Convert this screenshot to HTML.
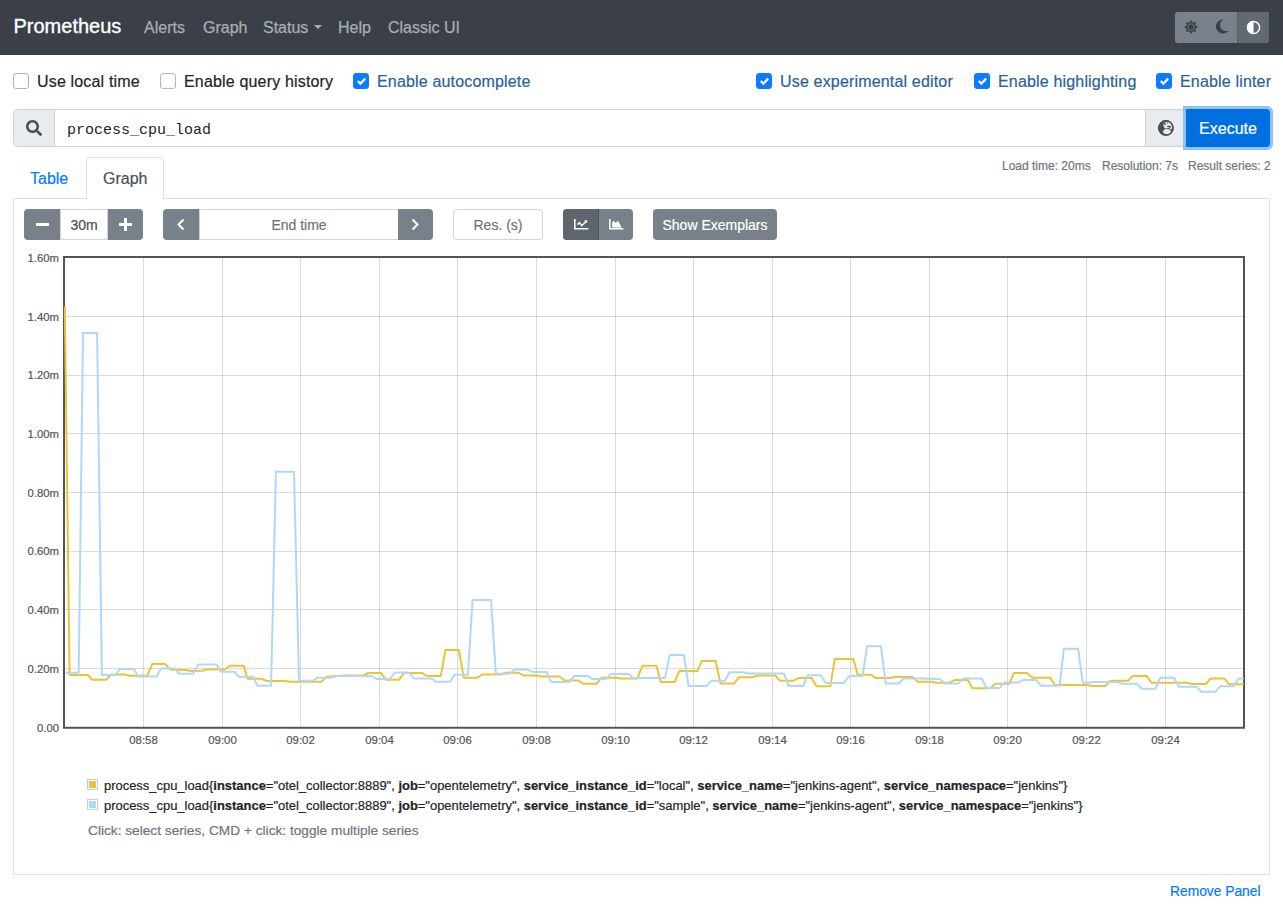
<!DOCTYPE html>
<html><head><meta charset="utf-8">
<style>
*{box-sizing:border-box}
html,body{margin:0;padding:0;width:1283px;height:906px;overflow:hidden;background:#fff;font-family:"Liberation Sans",sans-serif;color:#212529}
body{-webkit-text-stroke-width:0.2px}
.a{position:absolute;white-space:nowrap}
#nav{position:absolute;left:0;top:0;width:1283px;height:55px;background:#3b4048}
.brand{font-size:20px;color:#fff;left:13.5px;top:13.5px;line-height:24px;-webkit-text-stroke:0.35px #fff}
.nl{font-size:16px;color:#a9adb1;top:18px;line-height:20px;-webkit-text-stroke:0.25px #a9adb1}
.caret{position:absolute;left:313.5px;top:24.5px;width:0;height:0;border-left:4px solid transparent;border-right:4px solid transparent;border-top:4.5px solid #a9adb1}
.theme{position:absolute;left:1175px;top:12px;width:94px;height:31px;border-radius:3px;overflow:hidden;background:#7a818a}
.theme .act{position:absolute;left:62px;top:0;width:32px;height:31px;background:#636970;border-left:1px dotted #555}
.cb{position:absolute;width:16px;height:16px;border:1px solid #adb5bd;border-radius:3px;background:#fff;top:73px}
.cb.on{background:#0b7bff;border-color:#0b7bff}
.cb.on svg{position:absolute;left:3px;top:3px}
.lbl{font-size:16px;letter-spacing:0.17px;top:73px;line-height:18px;color:#212529}
.lbl.on{color:#2b6299}
.ig{position:absolute;left:13px;top:109px;width:1172px;height:38px;border:1px solid #ced4da;border-radius:4px 0 0 4px;background:#fff}
.ig .pre{position:absolute;left:0;top:0;width:41px;height:36px;background:#e9ecef;border-right:1px solid #ced4da}
.ig .post{position:absolute;right:0;top:0;width:39px;height:36px;background:#e9ecef;border-left:1px solid #ced4da}
.q{-webkit-text-stroke-width:0;font-family:"Liberation Mono",monospace;font-size:15px;left:67px;top:122px;line-height:18px;color:#212529}
.exe{position:absolute;left:1183px;top:106px;width:90px;height:44px;border-radius:0 6px 6px 0;background:#8fc2fb}
.exe div{position:absolute;left:3px;top:3px;width:84px;height:38px;border-radius:0 4px 4px 0;background:#0070e0;color:#fff;font-size:16px;line-height:40px;text-align:center}
.stats{font-size:12px;color:#6c757d;top:159px;line-height:14px}
.tabline{position:absolute;left:13px;top:198px;width:1257px;height:1px;background:#dee2e6}
.tab{position:absolute;left:86px;top:157px;width:78px;height:42px;border:1px solid #dee2e6;border-bottom:0;border-radius:4px 4px 0 0;background:#fff}
.panel{position:absolute;left:13px;top:198px;width:1257px;height:677px;border:1px solid #dee2e6;border-top:0}
.t16{font-size:16px;line-height:20px;top:169px}
.btn{position:absolute;background:#78808a;color:#fff;top:209px;height:31px}
.inp{position:absolute;top:209px;height:31px;border:1px solid #ced4da;background:#fff;color:#6c757d;font-size:14px;line-height:31px;text-align:center}
.xl{font-size:11.4px;color:#545454;width:60px;text-align:center;top:733px;line-height:14px}
.yl{font-size:11.3px;color:#545454;width:50px;text-align:right;left:9px;line-height:14px}
.leg{font-size:12.95px;left:104px;line-height:16px;color:#212529}
.leg b{font-weight:bold}
.sw{position:absolute;left:87px;width:11px;height:11px;border:1px solid #ccc;padding:1px;background:#fff}
.sw div{width:7px;height:7px}
</style></head><body>
<div id="nav">
  <div class="a brand">Prometheus</div>
  <div class="a nl" style="left:144px">Alerts</div>
  <div class="a nl" style="left:203px">Graph</div>
  <div class="a nl" style="left:263px">Status</div>
  <div class="caret"></div>
  <div class="a nl" style="left:338px">Help</div>
  <div class="a nl" style="left:388px">Classic UI</div>
  <div class="theme">
    <svg style="position:absolute;left:8px;top:7px" width="16" height="16" viewBox="0 0 16 16"><path fill="#3b4048" d="M15.00 8.00L12.20 6.12L12.20 9.88zM12.95 12.95L12.30 9.64L9.64 12.30zM8.00 15.00L9.88 12.20L6.12 12.20zM3.05 12.95L6.36 12.30L3.70 9.64zM1.00 8.00L3.80 9.88L3.80 6.12zM3.05 3.05L3.70 6.36L6.36 3.70zM8.00 1.00L6.12 3.80L9.88 3.80zM12.95 3.05L9.64 3.70L12.30 6.36z"/><circle cx="8" cy="8" r="4.6" fill="#3b4048"/><circle cx="8" cy="8" r="3.2" fill="none" stroke="#8a9098" stroke-width="0.6"/><rect x="6.2" y="6.2" width="3.6" height="3.6" fill="#3b4048"/></svg>
    <svg style="position:absolute;left:39px;top:7px" width="15" height="15" viewBox="0 0 16 16"><path fill="#3b4048" d="M10.5 0.5A7.5 7.5 0 1 0 15.5 12.5 6 6 0 0 1 10.5 0.5z"/></svg>
    <div class="act"></div>
    <svg style="position:absolute;left:70.5px;top:7.5px" width="15" height="15" viewBox="0 0 16 16"><circle cx="8" cy="8" r="6.5" fill="#636970" stroke="#fff" stroke-width="1.6"/><path d="M8 1.5A6.5 6.5 0 0 0 8 14.5z" fill="#fff"/></svg>
  </div>
</div>

<div class="cb" style="left:13px"></div><div class="a lbl" style="left:37px">Use local time</div>
<div class="cb" style="left:160px"></div><div class="a lbl" style="left:184px">Enable query history</div>
<div class="cb on" style="left:353px"><svg width="9" height="9" viewBox="0 0 8 8"><path fill="#fff" d="M6.564.75l-3.59 3.612-1.538-1.55L0 4.26l2.974 2.99L8 2.193z"/></svg></div><div class="a lbl on" style="left:377px">Enable autocomplete</div>
<div class="cb on" style="left:756px"><svg width="9" height="9" viewBox="0 0 8 8"><path fill="#fff" d="M6.564.75l-3.59 3.612-1.538-1.55L0 4.26l2.974 2.99L8 2.193z"/></svg></div><div class="a lbl on" style="left:780px">Use experimental editor</div>
<div class="cb on" style="left:974px"><svg width="9" height="9" viewBox="0 0 8 8"><path fill="#fff" d="M6.564.75l-3.59 3.612-1.538-1.55L0 4.26l2.974 2.99L8 2.193z"/></svg></div><div class="a lbl on" style="left:998px">Enable highlighting</div>
<div class="cb on" style="left:1156px"><svg width="9" height="9" viewBox="0 0 8 8"><path fill="#fff" d="M6.564.75l-3.59 3.612-1.538-1.55L0 4.26l2.974 2.99L8 2.193z"/></svg></div><div class="a lbl on" style="left:1180px">Enable linter</div>

<div class="ig">
  <div class="pre"><svg style="position:absolute;left:12px;top:10px" width="16" height="16" viewBox="0 0 512 512"><path fill="#495057" d="M505 442.7L405.3 343c-4.500-4.500-10.600-7-17-7H372c27.600-35.300 44-79.700 44-128C416 93.100 322.900 0 208 0S0 93.100 0 208s93.100 208 208 208c48.300 0 92.700-16.400 128-44v16.300c0 6.400 2.500 12.500 7 17l99.700 99.700c9.400 9.400 24.600 9.400 33.900 0l28.300-28.300c9.400-9.400 9.400-24.600.1-34zM208 336c-70.700 0-128-57.200-128-128 0-70.700 57.200-128 128-128 70.700 0 128 57.200 128 128 0 70.700-57.200 128-128 128z"/></svg></div>
  <div class="post"><svg style="position:absolute;left:12px;top:10px" width="16" height="16" viewBox="0 0 16 16"><circle cx="7.9" cy="7.9" r="7.8" fill="#495057"/><path fill="#e9ecef" d="M5.2 4.6L6.6 2.6 9 1.9 11.8 2.6 13.6 5 14.1 7.8 13.6 9.6 12.1 8.7 10.6 7.9 9 8.2 7.3 8.4 6.1 7.6 5.6 6z"/><ellipse cx="9" cy="11.6" rx="3.9" ry="2.6" fill="#e9ecef"/><circle cx="7.9" cy="7.9" r="7.1" fill="none" stroke="#495057" stroke-width="1.3"/><circle cx="6.9" cy="3.9" r="1" fill="#495057"/><circle cx="9.4" cy="3.1" r="0.6" fill="#495057"/><path fill="#495057" d="M8.3 6.4L10.8 5.4 13 6.6 12.4 8.2 10.6 7.2z"/></svg></div>
</div>
<div class="a q">process_cpu_load</div>
<div class="exe"><div>Execute</div></div>

<div class="a stats" style="left:1002px">Load time: 20ms</div>
<div class="a stats" style="left:1102px">Resolution: 7s</div>
<div class="a stats" style="left:1188px">Result series: 2</div>

<div class="panel"></div>
<div class="tabline"></div>
<div class="tab"></div>
<div class="a t16" style="left:30px;color:#007bff">Table</div>
<div class="a t16" style="left:103px;color:#495057">Graph</div>

<!-- controls -->
<div class="btn" style="left:24px;width:36px;border-radius:4px 0 0 4px"><div style="position:absolute;left:11.5px;top:13.5px;width:13px;height:3px;background:#fff"></div></div>
<div class="inp" style="left:60px;width:48px;color:#495057">30m</div>
<div class="btn" style="left:108px;width:35px;border-radius:0 4px 4px 0"><div style="position:absolute;left:11px;top:13.5px;width:13px;height:3px;background:#fff"></div><div style="position:absolute;left:16px;top:8.5px;width:3px;height:13px;background:#fff"></div></div>

<div class="btn" style="left:163px;width:36px;border-radius:4px 0 0 4px"><svg style="position:absolute;left:13px;top:9px" width="10" height="13" viewBox="0 0 10 13"><path d="M7.5 1.5L2.5 6.5l5 5" fill="none" stroke="#fff" stroke-width="2"/></svg></div>
<div class="inp" style="left:199px;width:200px">End time</div>
<div class="btn" style="left:398px;width:35px;border-radius:0 4px 4px 0"><svg style="position:absolute;left:12px;top:9px" width="10" height="13" viewBox="0 0 10 13"><path d="M2.5 1.5l5 5-5 5" fill="none" stroke="#fff" stroke-width="2"/></svg></div>

<div class="inp" style="left:453px;width:90px;border-radius:4px">Res. (s)</div>

<div class="btn" style="left:563px;width:70px;border-radius:4px;overflow:hidden">
  <div style="position:absolute;left:0;top:0;width:36px;height:31px;background:#5f656d;border-right:1px dotted rgba(0,0,0,0.28)"></div>
  <svg style="position:absolute;left:10.7px;top:10.1px" width="15" height="11" viewBox="0 0 15 11"><path d="M0.8 0v9.8h13.5" fill="none" stroke="#fff" stroke-width="1.6"/><path d="M3.4 5.6l2.1-2 2.3 3.1 3.9-3.9" fill="none" stroke="#fff" stroke-width="1.5"/><path d="M10 1.2h3.1v3.1z" fill="#fff"/></svg>
  <svg style="position:absolute;left:45.6px;top:10.1px" width="15" height="11" viewBox="0 0 15 11"><path d="M0.8 0v9.8h13.5" fill="none" stroke="#fff" stroke-width="1.6"/><path d="M3.1 8.4V3.6l1.5-2 1.7 2.2 1.3-0.9 1.6-1.2 1.2 2.5 2.2 4.2z" fill="#fff"/></svg>
</div>

<div class="btn" style="left:653px;width:124px;border-radius:4px;font-size:14px;line-height:33px;text-align:center">Show Exemplars</div>

<!-- chart -->
<svg style="position:absolute;left:0;top:0" width="1283" height="906">
  <g stroke="rgba(0,0,0,0.14)" stroke-width="1"><line x1="143.5" y1="257" x2="143.5" y2="728" /><line x1="222.5" y1="257" x2="222.5" y2="728" /><line x1="300.5" y1="257" x2="300.5" y2="728" /><line x1="379.5" y1="257" x2="379.5" y2="728" /><line x1="457.5" y1="257" x2="457.5" y2="728" /><line x1="536.5" y1="257" x2="536.5" y2="728" /><line x1="615.5" y1="257" x2="615.5" y2="728" /><line x1="693.5" y1="257" x2="693.5" y2="728" /><line x1="772.5" y1="257" x2="772.5" y2="728" /><line x1="850.5" y1="257" x2="850.5" y2="728" /><line x1="929.5" y1="257" x2="929.5" y2="728" /><line x1="1007.5" y1="257" x2="1007.5" y2="728" /><line x1="1086.5" y1="257" x2="1086.5" y2="728" /><line x1="1165.5" y1="257" x2="1165.5" y2="728" /><line x1="64" y1="316.5" x2="1244" y2="316.5" /><line x1="64" y1="375.5" x2="1244" y2="375.5" /><line x1="64" y1="433.5" x2="1244" y2="433.5" /><line x1="64" y1="492.5" x2="1244" y2="492.5" /><line x1="64" y1="551.5" x2="1244" y2="551.5" /><line x1="64" y1="609.5" x2="1244" y2="609.5" /><line x1="64" y1="668.5" x2="1244" y2="668.5" /></g>
  <rect x="64" y="257" width="1180" height="470.75" fill="none" stroke="#545454" stroke-width="2"/>
  <polyline points="64.8,306.6 69.6,675.0 87.8,675.0 92.2,679.8 106.4,679.8 110.7,674.6 124.4,674.6 129.8,675.7 147.3,675.7 152.2,664.0 165.3,664.0 170.2,669.8 186.0,670.0 191.0,671.0 202.6,670.8 205.9,669.5 225.1,669.5 229.7,665.8 243.7,665.8 247.6,678.8 261.5,678.8 266.9,681.0 285.4,681.0 289.4,681.7 321.2,681.7 326.5,676.8 345.0,675.5 363.2,675.5 367.9,673.1 381.1,673.1 385.8,679.7 399.3,679.7 403.7,673.1 422.2,673.1 426.9,675.9 440.8,675.9 445.4,650.0 458.9,650.0 463.7,677.7 477.2,677.7 482.5,674.5 501.0,674.5 505.7,672.8 518.6,672.8 523.3,675.5 536.5,675.5 541.8,676.4 559.7,676.4 564.3,680.5 578.2,680.5 582.9,683.7 596.8,683.7 601.4,677.7 617.3,677.7 620.0,678.5 637.2,678.5 642.5,665.8 656.4,665.8 660.8,682.1 674.6,682.0 679.3,671.1 697.2,671.1 701.8,660.9 715.7,660.9 720.4,683.4 734.3,683.4 738.9,677.2 752.2,677.2 757.5,675.5 775.3,675.5 780.0,680.8 793.2,680.8 798.5,678.1 811.8,678.1 816.4,686.3 830.3,686.3 834.8,658.9 853.2,658.9 857.8,674.8 871.1,674.8 875.7,678.1 890.3,678.1 894.9,677.1 912.8,677.1 917.5,681.7 932.0,681.7 936.0,682.8 949.3,682.8 954.6,680.1 967.8,680.1 972.4,688.3 990.3,688.3 995.5,683.8 1009.2,683.8 1013.9,673.1 1027.1,673.1 1032.4,677.7 1050.3,677.7 1054.9,685.1 1087.4,685.1 1092.0,686.1 1105.3,686.1 1109.9,680.8 1128.0,680.8 1132.7,676.1 1147.0,676.1 1151.3,682.8 1187.4,682.8 1192.0,684.1 1205.9,684.1 1210.6,678.5 1224.5,678.5 1229.1,684.3 1243.7,684.3" fill="none" stroke="#eec235" stroke-width="2" stroke-linejoin="round"/>
  <polyline points="65.5,672.7 78.7,672.7 83.0,333.0 97.1,333.0 101.9,675.0 115.6,675.0 119.8,669.0 134.2,669.0 138.0,676.6 156.6,676.6 161.0,668.4 174.6,668.4 179.0,673.8 193.3,673.8 198.0,664.6 216.5,664.6 221.1,671.8 234.4,671.8 239.0,676.8 252.9,676.8 257.6,685.7 271.1,685.7 275.9,471.8 294.0,471.8 299.0,680.8 312.6,680.8 317.2,677.7 330.5,677.7 335.8,676.1 371.9,676.1 376.5,679.0 389.8,679.0 395.0,672.5 409.0,672.5 413.6,678.5 431.5,678.5 436.1,681.8 450.0,681.8 454.7,674.8 467.9,674.8 472.6,599.9 491.1,599.9 495.8,673.7 509.7,673.7 514.5,669.6 527.2,669.6 532.5,671.9 546.4,671.9 551.1,682.1 569.0,682.1 574.3,675.9 587.5,675.9 592.2,679.0 606.1,679.0 610.7,674.1 629.3,674.1 633.2,678.1 665.0,678.1 669.7,655.0 683.9,655.0 688.6,686.1 706.4,686.1 711.1,680.8 725.0,680.8 729.6,672.2 743.5,672.2 748.2,673.5 784.0,673.5 788.6,686.1 803.2,686.1 807.8,675.2 821.0,675.2 825.7,683.1 843.9,683.0 849.2,675.9 862.5,675.9 867.1,646.3 881.0,646.3 885.7,683.4 898.9,683.4 903.5,678.5 922.0,678.5 940.0,679.0 944.6,683.4 958.5,683.4 963.2,678.5 981.7,678.5 986.4,688.0 999.9,688.0 1003.9,682.5 1017.8,682.5 1023.1,680.1 1036.4,680.1 1041.0,685.8 1059.6,685.8 1063.9,648.7 1078.1,648.7 1082.8,682.8 1099.0,682.1 1117.8,682.1 1122.5,683.8 1137.0,683.8 1141.7,688.7 1155.6,688.7 1160.2,677.8 1174.1,677.8 1178.8,686.7 1196.7,686.7 1201.3,691.8 1215.2,691.8 1219.9,686.3 1233.8,686.3 1238.4,678.5 1243.7,678.5" fill="none" stroke="#afd8f8" stroke-width="2" stroke-linejoin="round"/>
</svg>
<div class="a yl" style="top:251px">1.60m</div><div class="a yl" style="top:309.5px">1.40m</div><div class="a yl" style="top:368.2px">1.20m</div><div class="a yl" style="top:427px">1.00m</div><div class="a yl" style="top:485.5px">0.80m</div><div class="a yl" style="top:544.2px">0.60m</div><div class="a yl" style="top:602.8px">0.40m</div><div class="a yl" style="top:661.5px">0.20m</div><div class="a yl" style="top:720.5px">0.00</div>
<div class="a xl" style="left:113.5px">08:58</div><div class="a xl" style="left:192.5px">09:00</div><div class="a xl" style="left:270.5px">09:02</div><div class="a xl" style="left:349.5px">09:04</div><div class="a xl" style="left:427.5px">09:06</div><div class="a xl" style="left:506.5px">09:08</div><div class="a xl" style="left:585.5px">09:10</div><div class="a xl" style="left:663.5px">09:12</div><div class="a xl" style="left:742.5px">09:14</div><div class="a xl" style="left:820.5px">09:16</div><div class="a xl" style="left:899.5px">09:18</div><div class="a xl" style="left:977.5px">09:20</div><div class="a xl" style="left:1056.5px">09:22</div><div class="a xl" style="left:1135.5px">09:24</div>

<div class="sw" style="top:779px"><div style="background:#edc240"></div></div>
<div class="a leg" style="top:778px">process_cpu_load{<b>instance</b>="otel_collector:8889", <b>job</b>="opentelemetry", <b>service_instance_id</b>="local", <b>service_name</b>="jenkins-agent", <b>service_namespace</b>="jenkins"}</div>
<div class="sw" style="top:799px"><div style="background:#afd8f8"></div></div>
<div class="a leg" style="top:798px">process_cpu_load{<b>instance</b>="otel_collector:8889", <b>job</b>="opentelemetry", <b>service_instance_id</b>="sample", <b>service_name</b>="jenkins-agent", <b>service_namespace</b>="jenkins"}</div>
<div class="a" style="left:88px;top:823px;font-size:13.7px;line-height:16px;color:#6c757d">Click: select series, CMD + click: toggle multiple series</div>

<div class="a" style="left:1170px;top:884px;font-size:13.8px;line-height:16px;color:#007bff">Remove Panel</div>
</body></html>
